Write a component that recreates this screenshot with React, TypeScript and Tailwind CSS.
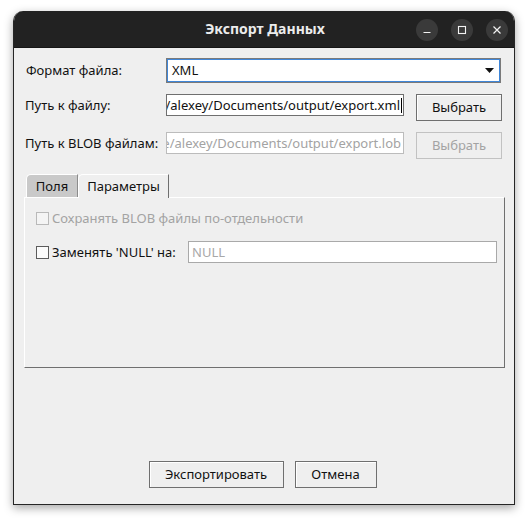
import React from 'react';

const Checkbox: React.FC<{ disabled?: boolean }> = ({ disabled }) => (
  <div
    className={
      disabled
        ? 'w-[13px] h-[13px] border border-[#b9b9b9] bg-[#f4f4f4]'
        : 'w-[13px] h-[13px] border border-[#5c5c5c] bg-[#fbfbfb]'
    }
  />
);

const PathInput: React.FC<{ value: string; disabled?: boolean }> = ({ value, disabled }) => (
  <div
    className={
      disabled
        ? 'w-[238px] h-[22px] border border-[#bcbcbc] bg-white flex items-center justify-end overflow-hidden pr-[2px]'
        : 'w-[238px] h-[22px] border border-[#6f6f6f] bg-white flex items-center justify-end overflow-hidden pr-[1px]'
    }
  >
    <span className={disabled ? 'whitespace-nowrap text-[#a3a3a3]' : 'whitespace-nowrap text-[#111]'}>{value}</span>
    {!disabled && <span className="w-px h-[15px] bg-black ml-px shrink-0" />}
  </div>
);

const Button: React.FC<{ label: string; disabled?: boolean; className?: string }> = ({ label, disabled, className }) => (
  <div
    className={
      (disabled
        ? 'border border-[#c2c2c2] text-[#a3a3a3] '
        : 'border border-[#6f6f6f] text-[#111] shadow-[inset_1px_1px_0_#ffffff] ') +
      'bg-[#efefef] flex items-center justify-center ' +
      (className ?? '')
    }
  >
    {label}
  </div>
);

export default function App() {
  return (
    <div className="w-[528px] h-[521px] bg-white pt-[11px] pl-[13px] font-['Noto_Sans',sans-serif] text-[13px] leading-none">
      <div className="w-[502px] h-[494px] flex flex-col rounded-t-[10px] overflow-hidden border-x border-b border-[#262626] shadow-[0_3px_10px_rgba(0,0,0,0.35)]">
        {/* title bar */}
        <div className="h-[37px] bg-[#222222] grid grid-cols-[1fr_auto_1fr] items-center border-b border-[#161616] shrink-0">
          <div />
          <div className="text-[#ececec] font-bold text-[14px] pl-[2px]">Экспорт Данных</div>
          <div className="flex justify-end items-center gap-[13px] pr-[6px] pt-px">
            <div className="w-[22px] h-[22px] rounded-full bg-[#3a3a3a] flex items-center justify-center">
              <svg width="10" height="10" viewBox="0 0 10 10">
                <path d="M1.5 7.5h7" stroke="#f2f2f2" strokeWidth="1.2" />
              </svg>
            </div>
            <div className="w-[22px] h-[22px] rounded-full bg-[#3a3a3a] flex items-center justify-center">
              <svg width="10" height="10" viewBox="0 0 10 10">
                <rect x="1.5" y="1.5" width="7" height="7" fill="none" stroke="#f2f2f2" strokeWidth="1.1" />
              </svg>
            </div>
            <div className="w-[22px] h-[22px] rounded-full bg-[#3a3a3a] flex items-center justify-center">
              <svg width="10" height="10" viewBox="0 0 10 10">
                <path d="M1.5 1.5l7 7M8.5 1.5l-7 7" stroke="#f2f2f2" strokeWidth="1.2" />
              </svg>
            </div>
          </div>
        </div>

        {/* body */}
        <div className="flex-1 bg-[#efefef] flex flex-col pl-[10px] pr-[9px] pt-[10px] pb-[16px]">
          {/* format */}
          <div className="flex items-center h-[25px]">
            <div className="w-[142px] pl-[2px] text-[#111]">Формат файла:</div>
            <div className="w-[335px] h-[25px] border border-[#7a7a7a] shadow-[inset_0_0_0_1px_#3f86d8] bg-white flex items-center pl-[5px] pr-[6px]">
              <span className="flex-1 text-[#111]">XML</span>
              <svg width="9" height="5" viewBox="0 0 9 5">
                <polygon points="0,0 9,0 4.5,5" fill="#111" />
              </svg>
            </div>
          </div>

          {/* path */}
          <div className="flex items-start h-[27px] mt-[11px]">
            <div className="w-[142px] h-[22px] pl-[1px] flex items-center text-[#111]">Путь к файлу:</div>
            <PathInput value="/alexey/Documents/output/export.xml" />
            <Button label="Выбрать" className="w-[86px] h-[27px] ml-[12px]" />
          </div>

          {/* blob path */}
          <div className="flex items-start h-[27px] mt-[11px]">
            <div className="w-[142px] h-[22px] pl-[1px] flex items-center text-[#111]">Путь к BLOB файлам:</div>
            <PathInput value="e/alexey/Documents/output/export.lob" disabled />
            <Button label="Выбрать" disabled className="w-[86px] h-[27px] ml-[12px]" />
          </div>

          {/* tabs */}
          <div className="mt-[14px] flex flex-col">
            <div className="flex items-end h-[24px] pl-[2px]">
              <div className="w-[52px] h-[23px] bg-[#c9c9c9] border-l border-t border-white border-r border-r-[#8c8c8c] rounded-tl-[5px] flex items-center justify-center text-[#111]">
                Поля
              </div>
              <div className="w-[91px] h-[24px] bg-[#efefef] border-l border-t border-white border-r border-r-[#6f6f6f] rounded-tl-[5px] flex items-center justify-center text-[#111] relative top-px">
                Параметры
              </div>
            </div>
            <div className="h-[171px] border-t border-l border-white border-r border-b border-r-[#6f6f6f] border-b-[#6f6f6f] pl-[11px] pr-[7px]">
              <div className="flex items-center h-[16px] mt-[12px] gap-[3px]">
                <Checkbox disabled />
                <span className="text-[#a3a3a3]">Сохранять BLOB файлы по-отдельности</span>
              </div>
              <div className="flex items-center h-[22px] mt-[15px]">
                <Checkbox />
                <span className="w-[139px] pl-[3px] text-[#111]">Заменять 'NULL' на:</span>
                <div className="flex-1 h-[22px] border border-[#a9a9a9] bg-white flex items-center pl-[3px] text-[#a8a8a8]">
                  NULL
                </div>
              </div>
            </div>
          </div>

          <div className="flex-1" />

          {/* footer buttons */}
          <div className="flex justify-center gap-[11px] pr-[4px]">
            <Button label="Экспортировать" className="w-[135px] h-[27px]" />
            <Button label="Отмена" className="w-[82px] h-[27px]" />
          </div>
        </div>
      </div>
    </div>
  );
}
